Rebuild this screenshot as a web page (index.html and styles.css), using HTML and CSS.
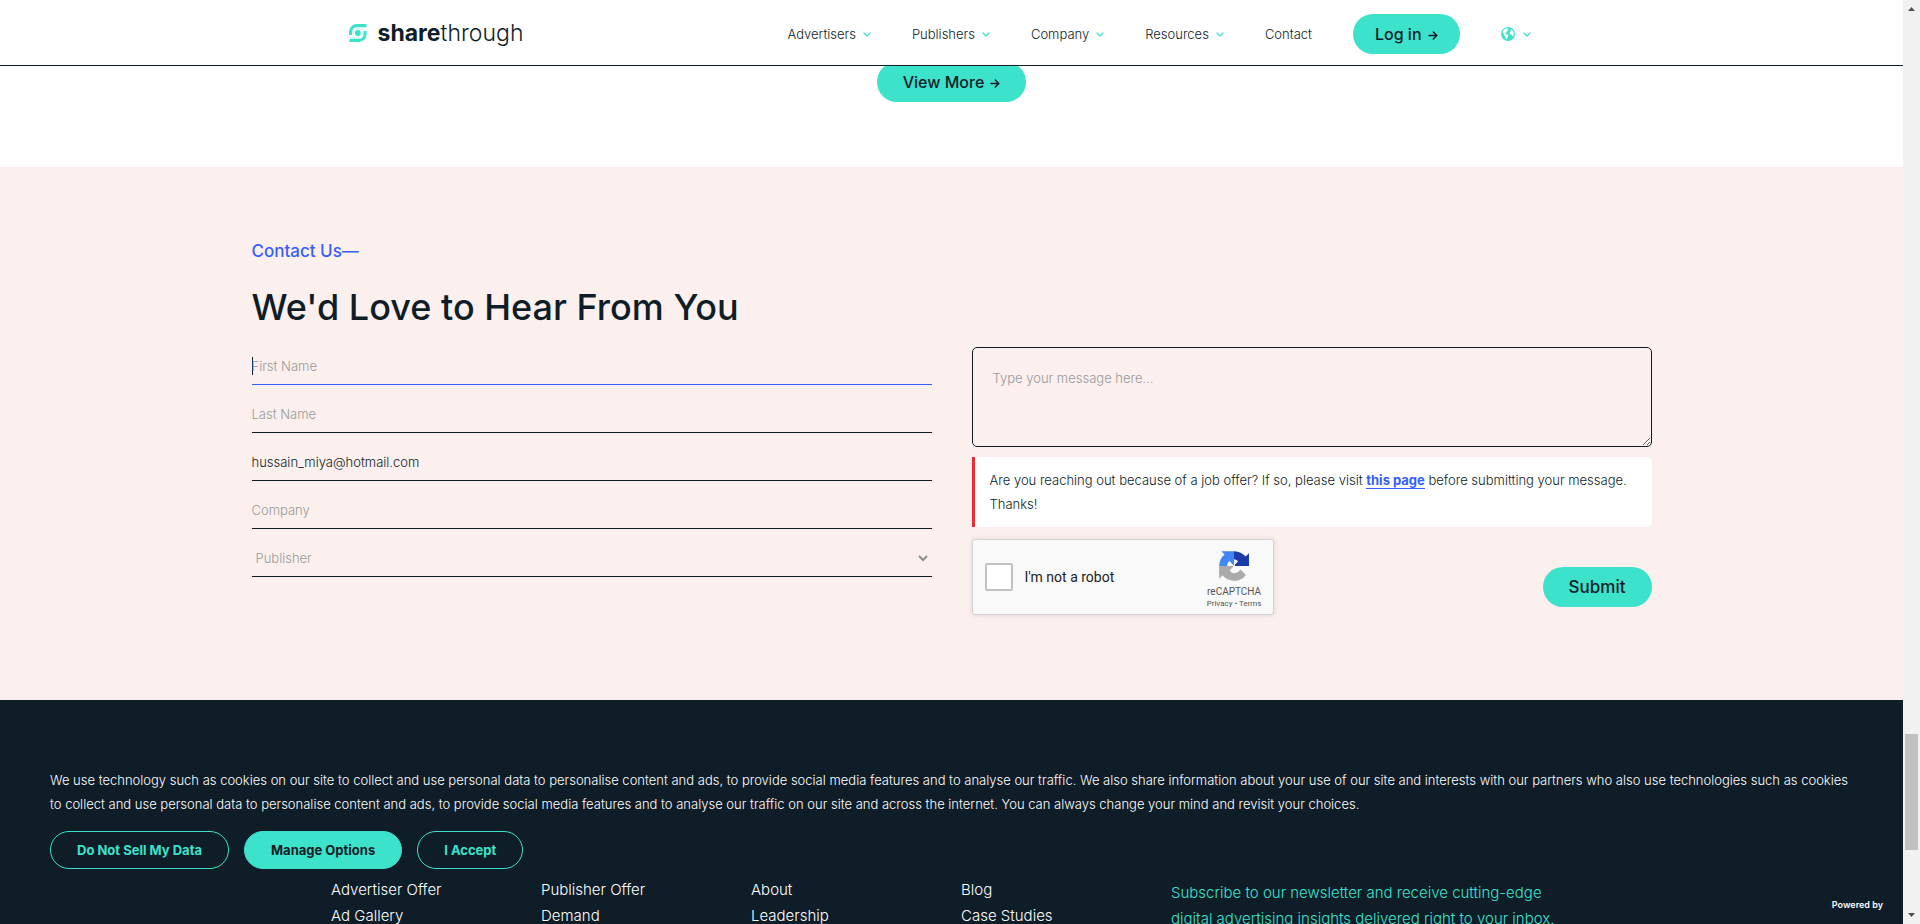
FILE: index.html
```html
<!DOCTYPE html>
<html lang="en">
<head>
<meta charset="utf-8">
<title>Sharethrough</title>
<link rel="stylesheet" href="styles.css">
</head>
<body>
<svg class="defs" aria-hidden="true">
  <symbol id="chevron" viewBox="0 0 8 5"><path d="M1 1l3 3 3-3" fill="none" stroke="currentColor" stroke-width="1.3" stroke-linecap="round" stroke-linejoin="round"/></symbol>
  <symbol id="arrow" viewBox="0 0 10 9"><path d="M1 4.500h7.500M5.300 1l3.500 3.500-3.500 3.500" fill="none" stroke="currentColor" stroke-width="1.500" stroke-linecap="round" stroke-linejoin="round"/></symbol>
</svg>
<div class="page">
  <header class="header">
    <div class="header-inner">
      <a class="brand" href="#">
        <svg class="brand-mark" viewBox="0 0 18 18" aria-hidden="true">
          <path d="M1.500 11V8.500C1.500 4.500 4.200 1.600 8 1.600h9.500M16.100 7v2.500c0 4-2.700 6.900-6.500 6.900H.5" fill="none" stroke="#3de2cb" stroke-width="3.100"/>
          <path d="M4.500 10.500V9c0-2.500 1.800-4.200 4.500-4.200h6.500M13.300 7.500V9c0 2.500-1.800 4.200-4.500 4.200H2.500" fill="none" stroke="#3de2cb" stroke-width="1" opacity=".35"/>
          <circle cx="8.800" cy="9" r="2.900" fill="#3de2cb"/>
        </svg>
        <span class="brand-name"><b>share</b>through</span>
      </a>
      <nav class="nav">
        <a href="#">Advertisers <svg class="chev"><use href="#chevron"/></svg></a>
        <a href="#">Publishers <svg class="chev"><use href="#chevron"/></svg></a>
        <a href="#">Company <svg class="chev"><use href="#chevron"/></svg></a>
        <a href="#">Resources <svg class="chev"><use href="#chevron"/></svg></a>
        <a href="#">Contact</a>
        <a class="btn btn-login" href="#">Log in <svg class="arrow"><use href="#arrow"/></svg></a>
        <a class="lang" href="#" aria-label="Language">
          <svg class="globe" viewBox="0 0 14 14" aria-hidden="true"><circle cx="7" cy="7" r="7" fill="#3de2cb"/><path d="M1.800 4.200C2.700 2.400 4.300 1.400 6.200 1.200l1 .7-.8 1 .6.700-1.400 1-.2 1.200-1.200.3.200 1 1.600.2 1.300 1-.1 1.300-1.200 1.200-.3 1.700-.9-.6-.3-2.200-1.300-1.200-.2-1.400L1.700 6zM9.500 3.300l1.400-.6 1.500 2.200.4 2.300-.7 2-1.200-.3-.3-1.400-1.500-.3-.6-1.500 1-1.200z" fill="#fff"/></svg>
          <svg class="chev"><use href="#chevron"/></svg>
        </a>
      </nav>
    </div>
  </header>

  <main>
    <div class="more"><a class="btn btn-more" href="#">View More <svg class="arrow"><use href="#arrow"/></svg></a></div>

    <section class="contact">
      <div class="contact-inner">
        <p class="eyebrow">Contact Us—</p>
        <h2 class="title">We'd Love to Hear From You</h2>
        <form class="form">
          <div class="fields">
            <input class="field is-active" type="text" placeholder="First Name" aria-label="First Name">
            <input class="field" type="text" placeholder="Last Name" aria-label="Last Name">
            <input class="field" type="email" value="hussain_miya@hotmail.com" aria-label="Email">
            <input class="field" type="text" placeholder="Company" aria-label="Company">
            <div class="select-wrap">
              <select class="field field-select" aria-label="Type"><option>Publisher</option><option>Advertiser</option></select>
              <svg class="select-chev" viewBox="0 0 10 7" aria-hidden="true"><path d="M1 1l4 4 4-4" fill="none" stroke="#8f8f8f" stroke-width="2"/></svg>
            </div>
          </div>
          <div class="message">
            <textarea class="textarea" placeholder="Type your message here..." aria-label="Message"></textarea>
            <p class="notice">Are you reaching out because of a job offer? If so, please visit <a href="#">this page</a> before submitting your message. <br>Thanks!</p>
            <div class="actions">
              <div class="captcha">
                <input class="captcha-box" type="checkbox" id="robot">
                <label class="captcha-label" for="robot">I'm not a robot</label>
                <div class="captcha-brand">
                  <svg class="captcha-logo" viewBox="0 0 64 64" aria-hidden="true">
                    <path fill="#1c3aa9" d="M64 32l-.02-1.370V4.870l-7.120 7.120C51.030 4.860 42.170.3 32.240.3L32 .31v17.080l.24-.01c3.400.04 6.540 2.030 8.320 4.880L34 28.800V32z"/>
                    <path fill="#4285f4" d="M31.900.3l-1.370.02H4.870l7.030 7.040C4.860 13.170.3 22.070.3 32h17.080c.04-5.640 3-9 4.880-10.420l5.500 5.500L32 31V.3z"/>
                    <path fill="#ababab" d="M.3 32l.02 1.370v25.670l7.120-7.120c5.830 7.130 14.700 11.690 24.620 11.690 10.340 0 19.520-4.940 25.340-12.600L45.720 39.200c-1.140 2.120-2.770 3.940-4.730 5.310-2.050 1.600-4.940 2.900-8.930 2.900-4.720-.13-7.730-2.700-9.360-5.760L30 33.500V32z"/>
                  </svg>
                  <span class="captcha-name">reCAPTCHA</span>
                  <span class="captcha-links"><a href="#">Privacy</a> • <a href="#">Terms</a></span>
                </div>
              </div>
              <button class="btn btn-submit" type="button">Submit</button>
            </div>
          </div>
        </form>
      </div>
    </section>
  </main>

  <footer class="footer">
    <div class="cookies">
      <p class="cookies-text">We use technology such as cookies on our site to collect and use personal data to personalise content and ads, to provide social media features and to analyse our traffic. We also share information about your use of our site and interests with our partners who also use technologies such as cookies <br>to collect and use personal data to personalise content and ads, to provide social media features and to analyse our traffic on our site and across the internet. You can always change your mind and revisit your choices.</p>
      <div class="cookies-actions">
        <button class="pill" type="button">Do Not Sell My Data</button>
        <button class="pill pill-solid" type="button">Manage Options</button>
        <button class="pill" type="button">I Accept</button>
      </div>
    </div>
    <div class="links">
      <div class="links-col"><a href="#">Advertiser Offer</a><a href="#">Ad Gallery</a></div>
      <div class="links-col"><a href="#">Publisher Offer</a><a href="#">Demand</a></div>
      <div class="links-col"><a href="#">About</a><a href="#">Leadership</a></div>
      <div class="links-col"><a href="#">Blog</a><a href="#">Case Studies</a></div>
      <p class="subscribe">Subscribe to our newsletter and receive cutting-edge <br>digital advertising insights delivered right to your inbox.</p>
    </div>
    <span class="powered">Powered by</span>
  </footer>
</div>
<div class="scrollbar" aria-hidden="true">
  <svg class="scroll-arrow" viewBox="0 0 7 4"><path d="M0 4l3.500-4L7 4z" fill="#505050"/></svg>
  <div class="scroll-track"><div class="scroll-thumb"></div></div>
  <svg class="scroll-arrow" viewBox="0 0 7 4"><path d="M0 0l3.500 4L7 0z" fill="#505050"/></svg>
</div>
</body>
</html>
```
FILE: styles.css
```css
:root {
  --ink: #0e1d28;
  --teal: #3de2cb;
  --blue: #365eff;
  --blush: #fbf0ed;
  --grey: #999;
}
* { box-sizing: border-box; }
body {
  margin: 0;
  height: 100vh;
  display: flex;
  overflow: hidden;
  background: #fff;
  color: var(--ink);
  font-family: Inter, Roboto, sans-serif;
  font-weight: 300;
  font-size: 13px;
}
a { color: inherit; text-decoration: none; }
p, h2 { margin: 0; }
input, select, textarea, button { font: inherit; color: inherit; }
.defs { position: absolute; width: 0; height: 0; }

.page { flex: 1; min-width: 0; height: 100vh; overflow: hidden; display: flex; flex-direction: column; }

.header { position: relative; z-index: 2; flex: none; background: #fff; border-bottom: 1px solid var(--ink); }
.header-inner {
  max-width: 1206px;
  margin: 0 auto;
  padding: 14px 24px 11px 0;
  display: flex;
  align-items: center;
  justify-content: space-between;
}
.brand { display: flex; align-items: center; gap: 11px; padding-bottom: 3px; }
.brand-mark { width: 18px; height: 18px; }
.brand-name { font-size: 23px; line-height: 36px; }
.brand-name b { font-weight: 700; }
.nav { display: flex; align-items: center; gap: 41px; }
.nav a { display: flex; align-items: center; gap: 7px; }
.chev { width: 8px; height: 5px; color: var(--teal); }
.nav .lang { gap: 8px; }
.globe { width: 14px; height: 14px; }
.arrow { width: 10px; height: 9px; margin-top: 3px; }

.btn {
  display: flex;
  align-items: center;
  justify-content: center;
  gap: 6px;
  height: 40px;
  padding: 0 26px;
  border: 0;
  border-radius: 20px;
  background: var(--teal);
  font-size: 16px;
  font-weight: 500;
}
.nav .btn-login { padding: 0 22px; gap: 6px; }

.more { display: flex; justify-content: center; margin-top: -4px; padding-bottom: 65px; }

.contact { background: var(--blush); padding: 70px 0 85px; }
.contact-inner { width: 1400px; max-width: 92%; margin: 0 auto; }
.eyebrow { font-size: 17px; line-height: 28px; font-weight: 500; color: var(--blue); }
.title { margin-top: 20px; font-size: 36px; line-height: 44px; font-weight: 600; }
.title { font-weight: 500; }
.form { display: grid; grid-template-columns: 1fr 1fr; gap: 40px; margin-top: 18px; }
.fields { display: flex; flex-direction: column; gap: 10px; }
.field {
  width: 100%;
  height: 38px;
  padding: 0;
  border: 0;
  border-bottom: 1px solid var(--ink);
  border-radius: 0;
  background: transparent;
  outline: 0;
}
.field::placeholder, .textarea::placeholder { color: var(--grey); opacity: 1; }
.is-active { border-color: var(--blue); background: linear-gradient(var(--ink), var(--ink)) 0 10px / 1px 18px no-repeat; }
.select-wrap { display: grid; align-items: center; }
.field-select { grid-area: 1 / 1; appearance: none; padding-left: 4px; color: var(--grey); }
.select-chev { grid-area: 1 / 1; justify-self: end; margin-right: 4px; width: 10px; height: 7px; pointer-events: none; }

.textarea {
  display: block;
  width: 100%;
  height: 100px;
  padding: 22px 20px;
  border: 1px solid var(--ink);
  border-radius: 5px;
  background: transparent;
  outline: 0;
}
.notice {
  margin-top: 10px;
  padding: 11px 15px;
  border-left: 3px solid #f02a2e;
  border-radius: 0 5px 5px 0;
  background: #fff;
  line-height: 24px;
}
.notice a { color: var(--blue); font-weight: 700; border-bottom: 1px solid var(--blue); }
.actions { display: flex; justify-content: space-between; align-items: flex-end; margin-top: 12px; }
.captcha {
  width: 302px;
  height: 76px;
  display: flex;
  align-items: center;
  padding: 0 11px 0 12px;
  border: 1px solid #d3d3d3;
  border-radius: 3px;
  background: #f9f9f9;
  box-shadow: 0 0 4px 1px rgba(0, 0, 0, .08);
  font-family: Roboto, sans-serif;
  font-weight: 400;
}
.captcha-box { appearance: none; width: 28px; height: 28px; margin: 0 12px 0 0; border: 2px solid #c1c1c1; border-radius: 2px; background: #fff; }
.captcha-label { flex: 1; font-size: 14px; color: #222; }
.captcha-brand { display: flex; flex-direction: column; align-items: center; color: #555; }
.captcha-logo { width: 30px; height: 30px; margin-top: 5px; }
.captcha-name { font-size: 10px; line-height: 14px; margin-top: 4px; }
.captcha-links { font-size: 8px; line-height: 10px; }
.btn-submit { margin-bottom: 8px; font-size: 17px; }

.footer { flex: 1; background: var(--ink); color: #fff; position: relative; padding-top: 68px; }
.cookies { padding: 0 50px; }
.cookies-text { font-size: 13px; line-height: 24px; white-space: nowrap; }
.cookies-actions { display: flex; gap: 15px; margin-top: 15px; }
.pill {
  height: 38px;
  padding: 0 26px;
  border: 1px solid var(--teal);
  border-radius: 19px;
  background: transparent;
  color: var(--teal);
  font-size: 13px;
  font-weight: 700;
}
.pill-solid { background: var(--teal); color: var(--ink); }
.links {
  display: grid;
  grid-template-columns: repeat(4, 210px) 1fr;
  max-width: 1241px;
  margin: 8px auto 0;
  font-size: 15px;
  line-height: 26px;
}
.links-col { display: flex; flex-direction: column; }
.subscribe { margin-top: 3px; color: var(--teal); white-space: nowrap; }
.powered { position: absolute; right: 20px; top: 199px; font-size: 9px; line-height: 12px; font-weight: 600; }

.scrollbar { flex: none; width: 17px; background: #f1f1f1; display: flex; flex-direction: column; align-items: center; padding: 7px 0; }
.scroll-arrow { flex: none; width: 7px; height: 4px; }
.scroll-track { flex: 1; width: 13px; padding-top: 723px; }
.scroll-thumb { height: 116px; background: #c1c1c1; }
```
